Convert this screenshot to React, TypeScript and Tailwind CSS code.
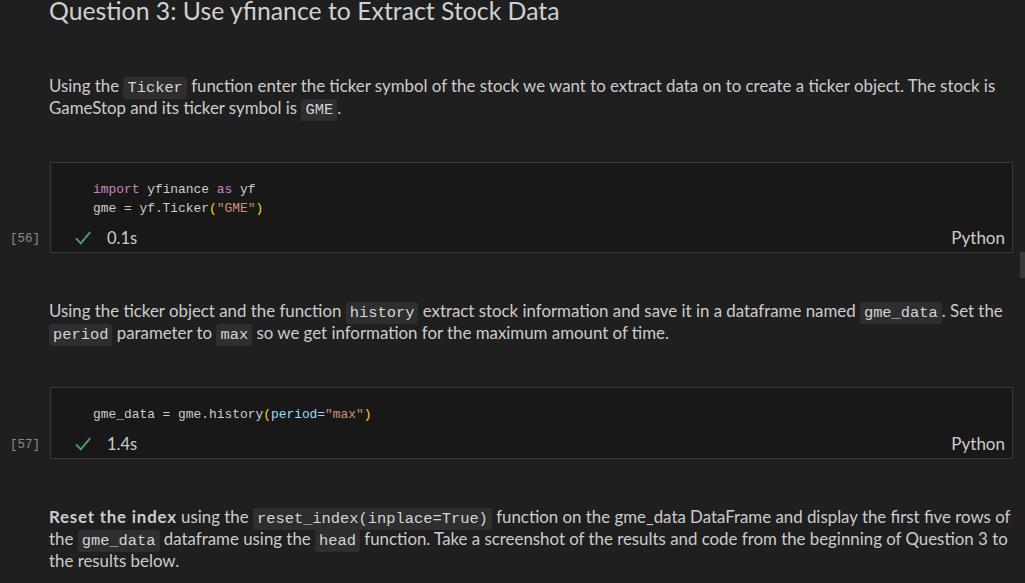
import type { ReactNode } from "react";

const sans = "font-['Lato','Open_Sans',sans-serif]";
const mono = "font-['Liberation_Mono','DejaVu_Sans_Mono',monospace]";

function Code({ children }: { children: ReactNode }) {
  return (
    <code className={`${mono} rounded-[3px] bg-[#2e2e2e] px-[4px] py-[2px] text-[15.4px] leading-none text-[#d4d4d4]`}>
      {children}
    </code>
  );
}

function CheckMark() {
  return (
    <svg width="18" height="18" viewBox="0 0 16 16" fill="none" className="text-[#4ea56b]">
      <path d="M1.8 8.4l4.2 4.4L14.4 2.8" stroke="currentColor" strokeWidth="1.6" />
    </svg>
  );
}

function Cell({ count, time, children }: { count: number; time: string; children: ReactNode }) {
  return (
    <div className="relative mt-[43px]">
      <div className={`${mono} absolute left-[10px] bottom-[4px] text-[12.5px] text-[#8a8a8a]`}>[{count}]</div>
      <div className="ml-[50px] mr-[12px] border border-[#393939] bg-[#181818]">
        <div className={`${mono} pl-[42px] pt-[17px] pb-[4px] text-[12.9px] leading-[19px] text-[#cccccc]`}>
          {children}
        </div>
        <div className="flex h-[30px] items-center pl-[23px] pr-[7px] pt-[2px]">
          <CheckMark />
          <span className="ml-[15px] text-[16.5px] text-[#cccccc]">{time}</span>
          <span className="ml-auto text-[17px] text-[#cccccc]">Python</span>
        </div>
      </div>
    </div>
  );
}

export default function App() {
  return (
    <div className={`${sans} relative h-[583px] w-full overflow-hidden bg-[#1f1f1f] text-[#cccccc]`}>
      <div className="-mt-[6px] pl-[49px]">
        <h1 className="text-[24.8px] leading-[34px] font-normal text-[#d0d0d0]">
          Question 3: Use yfinance to Extract Stock Data
        </h1>
        <p className="mt-[47px] pr-[12px] text-[16.85px] leading-[22px]">
          Using the <Code>Ticker</Code> function enter the ticker symbol of the stock we want to extract data on to
          create a ticker object. The stock is GameStop and its ticker symbol is <Code>GME</Code>.
        </p>
      </div>

      <Cell count={56} time="0.1s">
        <div>
          <span className="text-[#c586c0]">import</span> yfinance <span className="text-[#c586c0]">as</span> yf
        </div>
        <div>
          gme = yf.Ticker<span className="text-[#ffd700]">(</span>
          <span className="text-[#ce9178]">"GME"</span>
          <span className="text-[#ffd700]">)</span>
        </div>
      </Cell>

      <p className="mt-[47px] pl-[49px] pr-[12px] text-[16.85px] leading-[22px]">
        Using the ticker object and the function <Code>history</Code> extract stock information and save it in a
        dataframe named <Code>gme_data</Code>. Set the <Code>period</Code> parameter to <Code>max</Code> so we get
        information for the maximum amount of time.
      </p>

      <Cell count={57} time="1.4s">
        <div>
          gme_data = gme.history<span className="text-[#ffd700]">(</span>
          <span className="text-[#9cdcfe]">period</span>=<span className="text-[#ce9178]">"max"</span>
          <span className="text-[#ffd700]">)</span>
        </div>
      </Cell>

      <p className="mt-[47px] pl-[49px] pr-[12px] text-[16.85px] leading-[22px]">
        <b className="font-bold tracking-[0.8px]">Reset the index</b> using the <Code>reset_index(inplace=True)</Code>{" "}
        function on the gme_data DataFrame and display the first five rows of the <Code>gme_data</Code> dataframe
        using the <Code>head</Code> function. Take a screenshot of the results and code from the beginning of Question
        3 to the results below.
      </p>

      <div className="absolute right-0 top-[252px] h-[26px] w-[5px] bg-[#3a3a3a]" />
    </div>
  );
}
